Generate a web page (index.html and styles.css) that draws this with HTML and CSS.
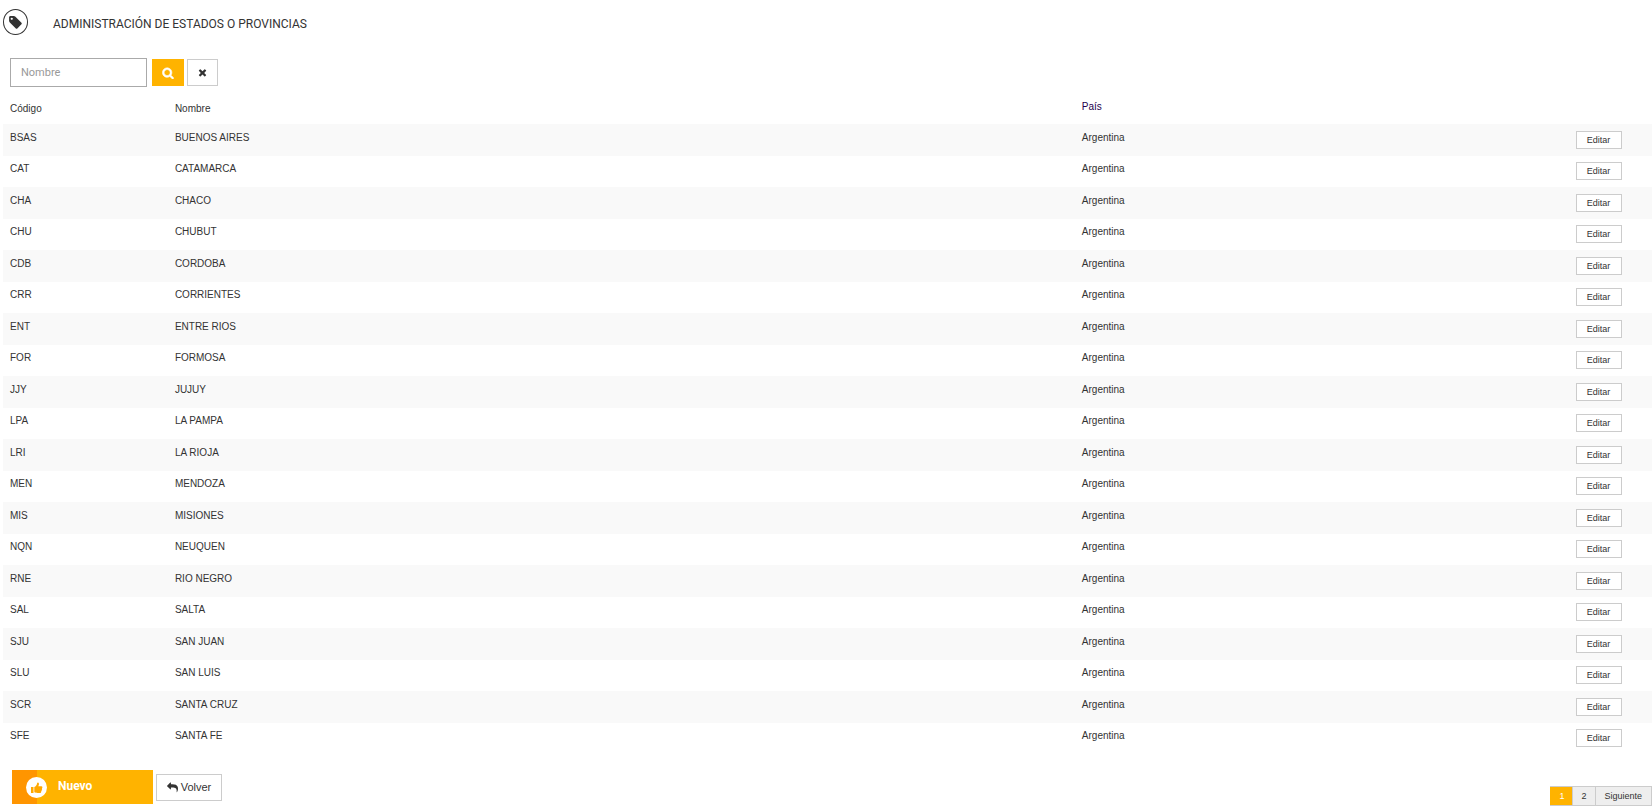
FILE: index.html
```html
<!DOCTYPE html>
<html lang="es">
<head>
    <meta charset="UTF-8">
    <meta name="viewport" content="width=device-width, initial-scale=1.0">
    <title>Administración de estados o provincias</title>
    <link rel="stylesheet" href="styles.css">
</head>
<body>
    <!-- Header -->
    <header class="header">
        <span class="header-icon">
            <svg viewBox="0 0 1536 1792" width="13" height="15" aria-hidden="true"><path fill="currentColor" d="M448 448q0-53-37.500-90.500t-90.500-37.500-90.500 37.500-37.500 90.500 37.500 90.500 90.500 37.500 90.500-37.500 37.500-90.500zm1067 576q0 53-37 90l-491 492q-39 37-91 37-53 0-90-37l-715-716q-38-37-64.500-101t-26.500-117v-416q0-52 38-90t90-38h416q53 0 117 26.500t102 64.500l715 714q37 39 37 91z"/></svg>
        </span>
        <h1>ADMINISTRACIÓN DE ESTADOS O PROVINCIAS</h1>
    </header>

    <!-- Search -->
    <form class="search">
        <input type="text" class="search-input" placeholder="Nombre" aria-label="Nombre">
        <button type="submit" class="search-button" aria-label="Buscar">
            <svg viewBox="0 0 1792 1792" width="12" height="12" aria-hidden="true"><path fill="currentColor" stroke="currentColor" stroke-width="90" d="M1216 832q0-185-131.500-316.500t-316.500-131.500-316.500 131.500-131.500 316.500 131.500 316.500 316.500 131.500 316.500-131.500 131.500-316.500zm512 832q0 52-38 90t-90 38q-54 0-90-38l-343-342q-179 124-399 124-143 0-273.500-55.500t-225-150-150-225-55.500-273.500 55.500-273.500 150-225 225-150 273.500-55.500 273.500 55.500 225 150 150 225 55.500 273.500q0 220-124 399l343 343q37 37 37 90z"/></svg>
        </button>
        <button type="reset" class="clear-button" aria-label="Limpiar">
            <svg viewBox="0 0 1792 1792" width="11" height="11" aria-hidden="true"><path fill="currentColor" d="M1490 1322q0 40-28 68l-136 136q-28 28-68 28t-68-28l-294-294-294 294q-28 28-68 28t-68-28l-136-136q-28-28-28-68t28-68l294-294-294-294q-28-28-28-68t28-68l136-136q28-28 68-28t68 28l294 294 294-294q28-28 68-28t68 28l136 136q28 28 28 68t-28 68l-294 294 294 294q28 28 28 68z"/></svg>
        </button>
    </form>

    <!-- States -->
    <table class="states">
        <thead>
            <tr>
                <th class="col-code">Código</th>
                <th class="col-name">Nombre</th>
                <th class="col-country"><a href="#">País</a></th>
                <th class="col-action"></th>
            </tr>
        </thead>
        <tbody>
            <tr><td>BSAS</td><td>BUENOS AIRES</td><td>Argentina</td><td><button class="edit-button">Editar</button></td></tr>
            <tr><td>CAT</td><td>CATAMARCA</td><td>Argentina</td><td><button class="edit-button">Editar</button></td></tr>
            <tr><td>CHA</td><td>CHACO</td><td>Argentina</td><td><button class="edit-button">Editar</button></td></tr>
            <tr><td>CHU</td><td>CHUBUT</td><td>Argentina</td><td><button class="edit-button">Editar</button></td></tr>
            <tr><td>CDB</td><td>CORDOBA</td><td>Argentina</td><td><button class="edit-button">Editar</button></td></tr>
            <tr><td>CRR</td><td>CORRIENTES</td><td>Argentina</td><td><button class="edit-button">Editar</button></td></tr>
            <tr><td>ENT</td><td>ENTRE RIOS</td><td>Argentina</td><td><button class="edit-button">Editar</button></td></tr>
            <tr><td>FOR</td><td>FORMOSA</td><td>Argentina</td><td><button class="edit-button">Editar</button></td></tr>
            <tr><td>JJY</td><td>JUJUY</td><td>Argentina</td><td><button class="edit-button">Editar</button></td></tr>
            <tr><td>LPA</td><td>LA PAMPA</td><td>Argentina</td><td><button class="edit-button">Editar</button></td></tr>
            <tr><td>LRI</td><td>LA RIOJA</td><td>Argentina</td><td><button class="edit-button">Editar</button></td></tr>
            <tr><td>MEN</td><td>MENDOZA</td><td>Argentina</td><td><button class="edit-button">Editar</button></td></tr>
            <tr><td>MIS</td><td>MISIONES</td><td>Argentina</td><td><button class="edit-button">Editar</button></td></tr>
            <tr><td>NQN</td><td>NEUQUEN</td><td>Argentina</td><td><button class="edit-button">Editar</button></td></tr>
            <tr><td>RNE</td><td>RIO NEGRO</td><td>Argentina</td><td><button class="edit-button">Editar</button></td></tr>
            <tr><td>SAL</td><td>SALTA</td><td>Argentina</td><td><button class="edit-button">Editar</button></td></tr>
            <tr><td>SJU</td><td>SAN JUAN</td><td>Argentina</td><td><button class="edit-button">Editar</button></td></tr>
            <tr><td>SLU</td><td>SAN LUIS</td><td>Argentina</td><td><button class="edit-button">Editar</button></td></tr>
            <tr><td>SCR</td><td>SANTA CRUZ</td><td>Argentina</td><td><button class="edit-button">Editar</button></td></tr>
            <tr><td>SFE</td><td>SANTA FE</td><td>Argentina</td><td><button class="edit-button">Editar</button></td></tr>
        </tbody>
    </table>

    <!-- Actions and pages -->
    <footer class="footer">
        <div class="actions">
            <button class="new-button">
                <svg viewBox="0 0 21 21" width="21" height="21" aria-hidden="true">
                    <circle cx="10.500" cy="10.500" r="10.500" fill="#fff"/>
                    <path fill="#ffa800" d="M5 10h2.500v6H5zM8.300 10c1.600-.6 2.500-2 2.900-4 .1-.7 1.500-.7 1.700.4.200 1-.2 1.900-.6 2.800h3c1.300 0 1.500 1.500.6 2 .5.600.3 1.400-.3 1.700.3.700 0 1.300-.5 1.500.2 1-.4 1.600-1.400 1.600h-2.200c-1.300 0-2-.6-3.200-.7z"/>
                </svg>
                <span>Nuevo</span>
            </button>
            <button class="back-button">
                <svg viewBox="0 0 1792 1792" width="11" height="11" aria-hidden="true"><path fill="currentColor" transform="matrix(-1 0 0 1 1792 0)" d="M1792 640q0 26-19 45l-512 512q-19 19-45 19t-45-19-19-45v-256h-224q-98 0-175.500 6t-154 21.500-133 42.500-105.500 69.500-80 101-48.500 138.500-17.500 181q0 55 5 123 0 6 2.500 23.500t2.500 26.500q0 15-8.500 25t-23.500 10q-16 0-28-17-7-9-13-22t-13.500-30-10.500-24q-127-285-127-451 0-199 53-333 162-403 875-403h224v-256q0-26 19-45t45-19 45 19l512 512q19 19 19 45z"/></svg>
                <span>Volver</span>
            </button>
        </div>
        <nav class="pagination" aria-label="Páginas">
            <a href="#" class="active">1</a>
            <a href="#">2</a>
            <a href="#">Siguiente</a>
        </nav>
    </footer>
</body>
</html>
```
FILE: styles.css
```css
/* General Styles */
* {
    box-sizing: border-box;
}

body {
    font-family: "Liberation Sans", Arial, sans-serif;
    font-size: 10px;
    color: #333;
    background: white;
    margin: 0;
}

button {
    font-family: inherit;
    padding: 0;
    border-radius: 0;
    cursor: pointer;
}

/* Header */
.header {
    display: flex;
    align-items: center;
    gap: 25px;
    padding: 9px 3px 0;
}

.header-icon {
    display: flex;
    align-items: center;
    justify-content: center;
    width: 25px;
    height: 26px;
    border: 1px solid #333;
    border-radius: 50%;
}

.header h1 {
    margin: 0;
    padding-top: 3px;
    font-family: Roboto, sans-serif;
    font-size: 12px;
    font-weight: 400;
}

/* Search */
.search {
    display: flex;
    align-items: center;
    padding: 23px 10px 0;
}

.search-input {
    width: 137px;
    height: 29px;
    margin-right: 5px;
    padding: 0 10px;
    border: 1px solid #aaa;
    font-family: Roboto, sans-serif;
    font-size: 11px;
}

.search-input::placeholder {
    color: #999;
}

.search-button, .clear-button {
    display: flex;
    align-items: center;
    justify-content: center;
    height: 27px;
}

.search-button {
    width: 32px;
    margin-right: 3px;
    background: #ffb300;
    border: none;
    color: white;
}

.clear-button {
    width: 31px;
    background: white;
    border: 1px solid #ccc;
    color: #333;
}

/* States */
.states {
    width: calc(100% - 3px);
    margin-left: 3px;
    border-collapse: collapse;
    table-layout: fixed;
}

.states th, .states td {
    padding: 7px 7px 0;
    font-weight: 400;
    line-height: 14px;
    text-align: left;
    vertical-align: top;
}

.states th {
    height: 37px;
    padding-top: 15px;
}

.states .col-country {
    padding-top: 13px;
}

.states th a {
    color: #23004d;
    text-decoration: none;
}

.col-code {
    width: 10%;
}

.col-name {
    width: 55%;
}

.col-country {
    width: 30%;
}

.col-action {
    width: 5%;
}

.states td {
    height: 31px;
    padding-top: 6px;
}

.states td:last-child {
    padding-left: 6px;
}

.states tbody tr:nth-child(odd) {
    background: #f9f9f9;
}

.states tbody tr:nth-child(odd) td {
    height: 32px;
    padding-top: 7px;
}

.edit-button {
    display: block;
    width: 46px;
    height: 18px;
    background: white;
    border: 1px solid #ccc;
    color: #333;
    font-size: 9px;
}

/* Footer */
.footer {
    display: flex;
    justify-content: space-between;
    align-items: flex-start;
    padding-top: 16px;
}

.actions {
    display: flex;
    align-items: center;
    gap: 3px;
    padding-left: 12px;
}

.new-button {
    display: flex;
    align-items: center;
    gap: 11px;
    width: 141px;
    height: 34px;
    padding-left: 14px;
    background: linear-gradient(to right, #ff9500 25px, #ffb300 25px);
    border: none;
    color: white;
    font-family: Roboto, sans-serif;
    font-size: 12px;
    font-weight: 700;
}

.new-button span {
    padding-bottom: 2px;
}

.back-button {
    display: flex;
    align-items: center;
    justify-content: center;
    gap: 3px;
    width: 66px;
    height: 27px;
    background: white;
    border: 1px solid #ccc;
    color: #333;
    font-size: 11px;
}

.pagination {
    display: flex;
    padding-top: 16px;
}

.pagination a {
    height: 20px;
    padding: 0 9px 0 8px;
    background: #eee;
    border: 1px solid #ccc;
    border-left: none;
    color: #333;
    font-size: 9px;
    line-height: 18px;
    text-decoration: none;
}

.pagination .active {
    padding: 0 8px 0 9px;
    background: #ffb300;
    color: white;
}
```
